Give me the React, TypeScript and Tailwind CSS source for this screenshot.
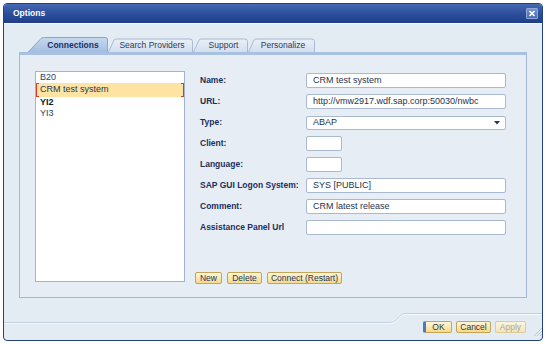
import React from "react";

function Tab({ w, active, label, pl }: { w: number; active?: boolean; label: string; pl: number }) {
  const h = 15;
  const fillPath = active
    ? `M0,${h} L13,1.5 Q14.5,0 16.5,0 L${w - 3},0 Q${w},0 ${w},3 L${w},${h} Z`
    : `M0,${h} L6,3 Q7,1.5 9,1.5 L${w - 3},1.5 Q${w},1.5 ${w},4.5 L${w},${h} Z`;
  const strokePath = active
    ? `M0.5,${h} L13,1.5 Q14.5,0.5 16.5,0.5 L${w - 3},0.5 Q${w - 0.5},0.5 ${w - 0.5},3 L${w - 0.5},${h}`
    : `M0.5,${h} L6,3 Q7,2 9,2 L${w - 3},2 Q${w - 0.5},2 ${w - 0.5},4.5 L${w - 0.5},${h}`;
  const gid = active ? "tabA" : "tabI";
  return (
    <div className="relative h-[15px] shrink-0" style={{ width: w }}>
      <svg className="absolute inset-0" width={w} height={h} viewBox={`0 0 ${w} ${h}`}>
        <defs>
          <linearGradient id="tabA" x1="0" y1="0" x2="0" y2="1">
            <stop offset="0" stopColor="#c9daf0" />
            <stop offset="1" stopColor="#a3bee2" />
          </linearGradient>
          <linearGradient id="tabI" x1="0" y1="0" x2="0" y2="1">
            <stop offset="0" stopColor="#eaf0f7" />
            <stop offset="1" stopColor="#d4e0ee" />
          </linearGradient>
        </defs>
        <path d={fillPath} fill={`url(#${gid})`} />
        <path d={strokePath} fill="none" stroke={active ? "#8aa4cb" : "#a7b9d3"} strokeWidth="1" />
      </svg>
      <span
        className={
          active
            ? "absolute inset-0 flex items-center justify-center pt-[1px] text-[8.5px] font-bold text-[#1c3160]"
            : "absolute inset-0 flex items-center justify-center pt-[2px] text-[8.5px] text-[#2a3c66]"
        }
        style={{ paddingLeft: pl }}
      >
        {label}
      </span>
    </div>
  );
}

function Field({ value, w }: { value?: string; w?: string }) {
  return (
    <div
      className={`h-[15px] ${w ?? "w-[200px]"} border border-[#a9b9d0] rounded-[2px] bg-white flex items-center pl-[6px] text-[9px] text-[#26344f] whitespace-nowrap overflow-hidden`}
    >
      {value}
    </div>
  );
}

function Label({ children }: { children: React.ReactNode }) {
  return (
    <div className="h-[15px] flex items-center text-[8.5px] font-bold text-[#1d2f5c] whitespace-nowrap">
      {children}
    </div>
  );
}

function YBtn({ children, w, disabled, def }: { children: React.ReactNode; w: string; disabled?: boolean; def?: boolean }) {
  return (
    <div
      className={
        disabled
          ? `${w} h-[12px] flex items-center justify-center border border-[#dccb9c] rounded-[2px] bg-gradient-to-b from-[#fbf5e0] to-[#f3e6b8] text-[8.5px] text-[#a8a8a8] leading-none`
          : def
          ? `${w} h-[12px] flex items-center justify-center border border-[#c5a458] border-l-[3px] border-l-[#4a78c8] rounded-[2px] bg-gradient-to-b from-[#fff6d4] to-[#f5da88] text-[8.5px] text-[#243560] leading-none`
          : `${w} h-[12px] flex items-center justify-center border border-[#c5a458] rounded-[2px] bg-gradient-to-b from-[#fff6d4] to-[#f5da88] text-[8.5px] text-[#243560] leading-none`
      }
    >
      {children}
    </div>
  );
}

export default function App() {
  return (
    <div className="w-[546px] h-[345px] bg-white p-[3px] font-['Liberation_Sans',Arial,sans-serif]">
      <div className="w-[540px] h-[338px] flex flex-col border border-[#23417e] rounded-[4px] overflow-hidden bg-[#e3ebf3]">
        {/* Title bar */}
        <div className="h-[19px] shrink-0 flex items-center justify-between pl-[9px] pr-[4px] bg-gradient-to-b from-[#4669b2] via-[#2d4f9c] to-[#1f3e86]">
          <span className="text-[8.5px] font-bold text-white">Options</span>
          <div className="w-[12px] h-[11px] flex items-center justify-center border border-[#8ea7d6] rounded-[1px] bg-gradient-to-b from-[#7592cc] to-[#4a6bb2]">
            <svg width="8" height="7" viewBox="0 0 8 7">
              <path d="M1.5,1 L6.5,6 M6.5,1 L1.5,6" stroke="white" strokeWidth="1.6" />
            </svg>
          </div>
        </div>

        {/* Body */}
        <div className="flex-1 flex flex-col border-t border-[#f4f7fb]">
          {/* Tabs */}
          <div className="mt-[13px] ml-[24px] flex h-[15px]">
            <Tab w={80} active label="Connections" pl={10} />
            <Tab w={85} label="Search Providers" pl={3} />
            <Tab w={55} label="Support" pl={6} />
            <Tab w={67} label="Personalize" pl={3} />
          </div>

          {/* Panel */}
          <div className="ml-[15px] w-[508px] h-[246px] shrink-0 border-x border-b border-[#a5b7d2] border-t-[3px] border-t-[#a8c0e1] bg-[#e6edf5] flex pl-[15px] pt-[16px]">
            {/* List */}
            <div className="w-[150px] h-[211px] shrink-0 border border-[#a3b3cb] bg-white flex flex-col text-[9px]">
              <div className="h-[11px] flex items-center pl-[4px] text-[#2b3d6b]">B20</div>
              <div className="relative h-[14px] flex items-center pl-[4px] bg-[#fde4a2] text-[#2b3550]">
                CRM test system
                <span className="absolute left-0 top-0 w-[1px] h-[14px] bg-[#e0392b]" />
                <span className="absolute left-0 top-0 w-[3px] h-[1px] bg-[#e0392b]" />
                <span className="absolute left-0 bottom-0 w-[3px] h-[1px] bg-[#e0392b]" />
                <span className="absolute right-0 top-0 w-[1px] h-[14px] bg-[#e0392b]" />
                <span className="absolute right-0 top-0 w-[3px] h-[1px] bg-[#e0392b]" />
                <span className="absolute right-0 bottom-0 w-[3px] h-[1px] bg-[#e0392b]" />
              </div>
              <div className="h-[11px] flex items-center pl-[4px] font-bold text-[#111a2e]">YI2</div>
              <div className="h-[12px] flex items-center pl-[4px] text-[#2b3d6b]">YI3</div>
            </div>

            {/* Form */}
            <div className="ml-[15px] pt-[2px] flex flex-col">
              <div className="grid grid-cols-[106px_200px] gap-y-[6px]">
                <Label>Name:</Label>
                <Field value="CRM test system" />
                <Label>URL:</Label>
                <Field value="http://vmw2917.wdf.sap.corp:50030/nwbc" />
                <Label>Type:</Label>
                <div className="h-[14px] mt-[1px] w-[200px] border border-[#a9b9d0] rounded-[2px] bg-white flex items-center justify-between pl-[6px] pr-[5px] text-[9px] text-[#26344f]">
                  <span>ABAP</span>
                  <svg width="6" height="4" viewBox="0 0 6 4">
                    <path d="M0,0 L6,0 L3,3.5 Z" fill="#2a3550" />
                  </svg>
                </div>
                <Label>Client:</Label>
                <Field w="w-[36px]" />
                <Label>Language:</Label>
                <Field w="w-[36px]" />
                <Label>SAP GUI Logon System:</Label>
                <Field value="SYS [PUBLIC]" />
                <Label>Comment:</Label>
                <Field value="CRM latest release" />
                <Label>Assistance Panel Url</Label>
                <Field />
              </div>
              <div className="mt-[37px] -ml-[5px] flex gap-[5px]">
                <YBtn w="w-[27px]">New</YBtn>
                <YBtn w="w-[35px]">Delete</YBtn>
                <YBtn w="w-[75px]">Connect (Restart)</YBtn>
              </div>
            </div>
          </div>

          {/* Footer */}
          <div className="relative flex-1 flex justify-end items-start pt-[23px] pr-[16px] gap-[4px]">
            <svg className="absolute left-0 top-0" width="540" height="40" viewBox="0 0 540 40">
              <path d="M0,24.5 L386,24.5 C394,24.5 394,15.5 402,15.5 L540,15.5" fill="none" stroke="#c3d0e2" strokeWidth="1" />
              <path d="M0,25.5 L386,25.5 C394,25.5 394,16.5 402,16.5 L540,16.5" fill="none" stroke="#f5f8fc" strokeWidth="1" />
              <path d="M530,38 L538,30 M533,38 L538,33 M536,38 L538,36" stroke="#b9c6d8" strokeWidth="1" />
            </svg>
            <div className="relative flex gap-[4px]">
              <YBtn w="w-[29px]" def>OK</YBtn>
              <YBtn w="w-[35px]">Cancel</YBtn>
              <YBtn w="w-[31px]" disabled>Apply</YBtn>
            </div>
          </div>
        </div>
      </div>
    </div>
  );
}
